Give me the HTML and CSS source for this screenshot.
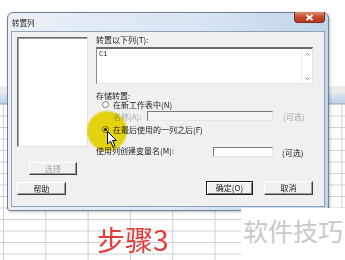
FILE: index.html
```html
<!DOCTYPE html>
<html lang="zh">
<head>
  <meta charset="UTF-8" />
  <title>转置列</title>
  <link rel="stylesheet" href="styles.css">
</head>
<body>
  <div class="sheet">
    <div class="sheet-bar"></div>
    <div class="sheet-head"></div>
    <div class="sheet-grid">
      <div class="step">步骤3</div>
    </div>
  </div>

  <div class="dialog">
    <div class="titlebar">
      <span class="title">转置列</span>
      <span class="close">
        <svg width="9" height="7" viewBox="0 0 9 7"><path d="M1.5 1 L7.5 6 M7.5 1 L1.5 6" stroke="#fff" stroke-width="1.8"/></svg>
      </span>
    </div>
    <div class="client">
      <div class="main">
        <div class="left">
          <div class="listbox"></div>
          <button class="btn btn-select" disabled>选择</button>
        </div>
        <div class="right">
          <div class="label label-top">转置以下列(T):</div>
          <div class="textarea">
            <span class="cols">C1</span>
            <div class="scrollbar">
              <svg width="5" height="3" viewBox="0 0 5 3"><path d="M0.5 2.5 L2.5 0.5 L4.5 2.5" fill="none" stroke="#8a8a8a"/></svg>
              <svg width="5" height="3" viewBox="0 0 5 3"><path d="M0.5 0.5 L2.5 2.5 L4.5 0.5" fill="none" stroke="#8a8a8a"/></svg>
            </div>
          </div>
          <div class="label label-store">存储转置:</div>
          <div class="radio-row"><span class="radio"></span>在新工作表中(N)</div>
          <div class="name-row">
            <span class="name-label">名称(A):</span>
            <span class="input input-name"></span>
            <span class="opt opt-off">(可选)</span>
          </div>
          <div class="radio-row radio-row-last"><span class="radio checked"></span>在最后使用的一列之后(F)</div>
          <div class="var-row">
            <span class="var-label">使用列创建变量名(M):</span>
            <span class="input input-var"></span>
            <span class="opt">(可选)</span>
          </div>
        </div>
      </div>
      <div class="buttons">
        <button class="btn btn-help">帮助</button>
        <button class="btn btn-ok">确定(O)</button>
        <button class="btn btn-cancel">取消</button>
      </div>
    </div>
  </div>

  <div class="highlight"></div>
  <svg class="cursor" width="11" height="17" viewBox="0 0 11 17">
    <path d="M0.5 0.5 L0.5 13 L3.5 10.2 L5.8 15.5 L7.8 14.6 L5.6 9.5 L9.5 9.5 Z" fill="#fff" stroke="#000" stroke-width="1" stroke-linejoin="round"/>
  </svg>
  <div class="watermark">软件技巧</div>
</body>
</html>
```

FILE: styles.css
```css
* {
  box-sizing: border-box;
}

body {
  margin: 0;
  width: 345px;
  height: 260px;
  overflow: hidden;
  position: relative;
  background: #fff;
  font-family: "Noto Sans CJK SC", "Liberation Sans", sans-serif;
  font-size: 8px;
  color: #222;
}

/* spreadsheet behind the dialog */
.sheet {
  height: 260px;
  padding-top: 86px;
  display: flex;
  flex-direction: column;
}

.sheet-bar {
  height: 7px;
  background: #ececec;
}

.sheet-head {
  height: 11px;
  background: linear-gradient(#dde7f2, #c2d3e6);
  border-bottom: 1px solid #a9bdd3;
}

.sheet-grid {
  flex: 1;
  padding: 121px 0 0 97px;
  background-image:
    linear-gradient(to bottom, #cfcfcf 1px, transparent 1px),
    linear-gradient(to right, #cfcfcf 1px, transparent 1px);
  background-size: 100% 11.5px, 42.3px 100%;
  background-position: 0 0, 3px 0;
}

.step {
  font-size: 28px;
  line-height: 28px;
  color: #e23c3c;
}

/* dialog window */
.dialog {
  position: absolute;
  left: 7px;
  top: 12px;
  width: 322px;
  height: 199px;
  border: 1px solid #6f8297;
  border-radius: 6px 6px 3px 3px;
  padding: 0 3px 3px 3px;
  background: linear-gradient(to right, #eaf0f7, #d9e5f2 60%, #c0d4ea);
  box-shadow: 1px 1px 3px rgba(0, 0, 0, 0.25);
}

.titlebar {
  height: 18px;
  display: flex;
  align-items: center;
  justify-content: space-between;
  padding-left: 1px;
}

.title {
  font-size: 7.5px;
  color: #1a1a1a;
}

.close {
  align-self: flex-start;
  width: 31px;
  height: 11px;
  margin-top: -1px;
  border: 1px solid #7b2a1e;
  border-top: none;
  border-radius: 0 0 4px 4px;
  background: linear-gradient(#df8a74, #c7492f 50%, #b43a22);
  display: flex;
  align-items: center;
  justify-content: center;
}

.client {
  height: 176px;
  border: 1px solid #8ea2b8;
  background: #f0f0f0;
  padding: 5px 11px 0 5px;
}

.main {
  display: grid;
  grid-template-columns: 71px 1fr;
  column-gap: 8px;
}

.listbox {
  height: 110px;
  background: #fff;
  border: 1px solid;
  border-color: #6e6e6e #e3e3e3 #e3e3e3 #6e6e6e;
  box-shadow: inset 1px 1px 0 #a0a0a0;
}

.btn {
  display: block;
  height: 14px;
  padding: 0;
  font-family: inherit;
  font-size: 8px;
  line-height: 12px;
  color: #222;
  background: #f0f0f0;
  border: 1px solid;
  border-color: #fff #3c3c3c #3c3c3c #fff;
  box-shadow: inset -1px -1px 0 #a0a0a0;
}

.btn-select {
  width: 48px;
  height: 13px;
  margin: 15px 0 0 12px;
  color: #a6a6a6;
}

.label {
  line-height: 9px;
  white-space: nowrap;
}

.label-top {
  margin-top: -2px;
}

.textarea {
  margin-top: 3px;
  height: 37px;
  display: flex;
  justify-content: space-between;
  background: #fff;
  border-style: solid;
  border-width: 2px 1px 1px 1px;
  border-color: #6a6a6a #e6e6e6 #e6e6e6 #8a8a8a;
}

.cols {
  padding: 2px 0 0 2px;
  font-family: "Liberation Mono", monospace;
  font-size: 7px;
  line-height: 7px;
}

.scrollbar {
  width: 11px;
  border-left: 1px solid #ececec;
  display: flex;
  flex-direction: column;
  align-items: center;
  justify-content: space-between;
  padding: 4px 0 3px;
}

.label-store {
  margin-top: 7px;
}

.radio-row {
  display: flex;
  align-items: center;
  gap: 4px;
  height: 9px;
  padding-left: 6px;
  white-space: nowrap;
}

.radio-row-last {
  margin-top: 4px;
}

.radio {
  width: 7px;
  height: 7px;
  border-radius: 50%;
  border: 1px solid #7a7a7a;
  background: #fff;
  display: flex;
  align-items: center;
  justify-content: center;
}

.radio.checked::after {
  content: "";
  width: 3px;
  height: 3px;
  border-radius: 50%;
  background: #111;
}

.name-row {
  display: flex;
  align-items: center;
  height: 10px;
  margin-top: 2px;
  padding-left: 17px;
}

.name-label {
  width: 34px;
  color: #a8a8a8;
}

.input {
  height: 10px;
  background: #fff;
  border: 1px solid;
  border-color: #7a7a7a #e6e6e6 #e6e6e6 #7a7a7a;
}

.input-name {
  width: 126px;
  background: #f4f4f4;
}

.opt {
  margin-left: 9px;
  white-space: nowrap;
}

.opt-off {
  margin-left: 10px;
  color: #a8a8a8;
}

.var-row {
  display: flex;
  align-items: center;
  height: 10px;
  margin-top: 13px;
}

.var-label {
  width: 117px;
  margin-top: -3px;
  white-space: nowrap;
}

.input-var {
  width: 60px;
}

.buttons {
  display: flex;
  align-items: flex-end;
  margin-top: 6px;
}

.btn-help {
  width: 49px;
  height: 13px;
}

.btn-ok {
  width: 47px;
  margin-left: auto;
  border-color: #1a1a1a;
  box-shadow: inset 1px 1px 0 #fff, inset -1px -1px 0 #808080;
}

.btn-cancel {
  width: 49px;
  margin-left: 11px;
}

/* overlays from the recording */
.highlight {
  position: absolute;
  left: 86px;
  top: 110px;
  width: 42px;
  height: 42px;
  border-radius: 50%;
  background: radial-gradient(circle, #f2e010 62%, rgba(242, 224, 16, 0) 72%);
  mix-blend-mode: multiply;
}

.cursor {
  position: absolute;
  left: 107px;
  top: 131px;
}

.watermark {
  position: absolute;
  right: 0;
  bottom: 0;
  width: 104px;
  height: 52px;
  background: #fff;
  padding: 7px 0 0 2px;
  font-size: 25px;
  line-height: 31px;
  color: #c8c8c8;
  white-space: nowrap;
}
```
